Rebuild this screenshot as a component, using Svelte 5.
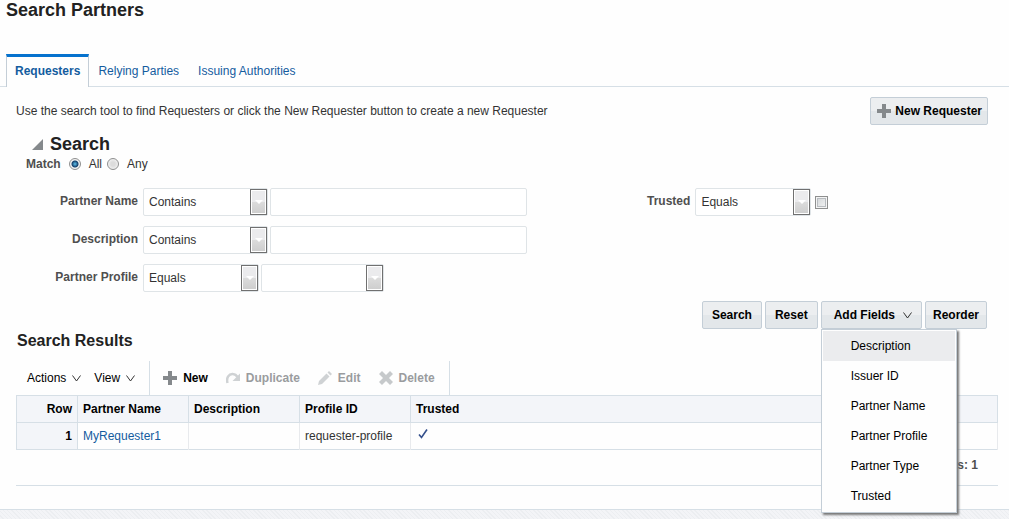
<script>
  let tabs = ["Requesters", "Relying Parties", "Issuing Authorities"]
  let activeTab = "Requesters"
  let match = "all"
  let searchOpen = true
  let menuOpen = true

  let name = ""
  let description = ""
  let nameOp = "Contains"
  let descriptionOp = "Contains"
  let profileOp = "Equals"
  let profile = ""
  let trustedOp = "Equals"
  let trusted = false

  let textOps = ["Contains", "Equals", "Starts with", "Ends with"]
  let profiles = ["", "requester-profile"]
  let fields = ["Description", "Issuer ID", "Partner Name", "Partner Profile", "Partner Type", "Trusted"]
  let rows = [
    { name: "MyRequester1", description: "", profile: "requester-profile", trusted: true }
  ]

  function reset() {
    name = ""
    description = ""
    profile = ""
    trusted = false
    match = "all"
  }
</script>

{#snippet plus()}
  <svg class="icon" viewBox="0 0 14 14" aria-hidden="true"><path d="M5 0h4v5h5v4H9v5H5V9H0V5h5z" fill="#85898c" /></svg>
{/snippet}

{#snippet chevron()}
  <svg class="chevron" viewBox="0 0 9 7" aria-hidden="true"><path d="M0.5 0.5L4.5 6L8.5 0.5" fill="none" stroke="#333" /></svg>
{/snippet}

{#snippet arrow()}
  <span class="arrow" aria-hidden="true"><svg viewBox="0 0 8 4"><path d="M0 0h8L4 4z" fill="#fff" /></svg></span>
{/snippet}

<div class="page">
  <h1>Search Partners</h1>

  <nav>
    {#each tabs as tab}
      <button class="tab" class:active={activeTab === tab} on:click={() => activeTab = tab}>{tab}</button>
    {/each}
  </nav>

  <main>
    <div class="intro">
      <p>Use the search tool to find Requesters or click the New Requester button to create a new Requester</p>
      <button class="btn new">{@render plus()}New Requester</button>
    </div>

    <section class="search">
      <h2>
        <button class="toggle" aria-label="Toggle search" on:click={() => searchOpen = !searchOpen}>
          <svg viewBox="0 0 11 11"><path d="M11 0v11H0z" fill="#85898c" /></svg>
        </button>
        Search
      </h2>

      {#if searchOpen}
        <div class="match" role="radiogroup" aria-labelledby="match">
          <b id="match">Match</b>
          <label><input type="radio" value="all" bind:group={match} />All</label>
          <label><input type="radio" value="any" bind:group={match} />Any</label>
        </div>

        <div class="form">
          <div class="fields">
            <div class="field">
              <label for="name">Partner Name</label>
              <span class="select wide">
                <select bind:value={nameOp} aria-label="Partner Name operator">
                  {#each textOps as op}<option>{op}</option>{/each}
                </select>
                {@render arrow()}
              </span>
              <input id="name" type="text" bind:value={name} />
            </div>
            <div class="field">
              <label for="description">Description</label>
              <span class="select wide">
                <select bind:value={descriptionOp} aria-label="Description operator">
                  {#each textOps as op}<option>{op}</option>{/each}
                </select>
                {@render arrow()}
              </span>
              <input id="description" type="text" bind:value={description} />
            </div>
            <div class="field">
              <label for="profile">Partner Profile</label>
              <span class="select">
                <select bind:value={profileOp} aria-label="Partner Profile operator">
                  <option>Equals</option>
                </select>
                {@render arrow()}
              </span>
              <span class="select value">
                <select id="profile" bind:value={profile}>
                  {#each profiles as p}<option>{p}</option>{/each}
                </select>
                {@render arrow()}
              </span>
            </div>
          </div>
          <div class="fields">
            <div class="field">
              <label for="trusted">Trusted</label>
              <span class="select">
                <select bind:value={trustedOp} aria-label="Trusted operator">
                  <option>Equals</option>
                </select>
                {@render arrow()}
              </span>
              <input id="trusted" type="checkbox" bind:checked={trusted} />
            </div>
          </div>
        </div>
      {/if}

      <div class="actions">
        <button class="btn">Search</button>
        <button class="btn" on:click={reset}>Reset</button>
        <div class="menu-wrap">
          <button class="btn drop" aria-expanded={menuOpen} on:click={() => menuOpen = !menuOpen}>Add Fields {@render chevron()}</button>
          {#if menuOpen}
            <div class="menu" role="menu">
              {#each fields as field, i}
                <button role="menuitem" class:current={i === 0}>{field}</button>
              {/each}
            </div>
          {/if}
        </div>
        <button class="btn reorder">Reorder</button>
      </div>
    </section>

    <section>
      <h3>Search Results</h3>

      <div class="toolbar">
        <div class="group menus">
          <button>Actions {@render chevron()}</button>
          <button>View {@render chevron()}</button>
        </div>
        <div class="group tools">
          <button>{@render plus()}New</button>
          <button disabled>
            <svg class="icon" viewBox="0 0 14 14" aria-hidden="true">
              <path d="M1.5 12C0 7 3 2.500 7 3C9 3.200 10.500 4.300 11.500 6" fill="none" stroke="#cfd2d4" stroke-width="2.500" />
              <path d="M14 2.500V10H6.500z" fill="#cfd2d4" />
            </svg>Duplicate
          </button>
          <button disabled>
            <svg class="icon" viewBox="0 0 14 14" aria-hidden="true">
              <path d="M0 14L1 10L8.500 2.500L11.500 5.500L4 13zM9.500 1.500L11 0L14 3L12.500 4.500z" fill="#cfd2d4" />
            </svg>Edit
          </button>
          <button disabled>
            <svg class="icon" viewBox="0 0 14 14" aria-hidden="true">
              <path d="M3 0L7 4L11 0L14 3L10 7L14 11L11 14L7 10L3 14L0 11L4 7L0 3z" fill="#c6c9cb" />
            </svg>Delete
          </button>
        </div>
      </div>

      <table>
        <thead>
          <tr>
            <th class="num">Row</th>
            <th class="col">Partner Name</th>
            <th class="col">Description</th>
            <th class="col">Profile ID</th>
            <th>Trusted</th>
          </tr>
        </thead>
        <tbody>
          {#each rows as row, i}
            <tr>
              <th class="num">{i + 1}</th>
              <td><a href="#partner">{row.name}</a></td>
              <td>{row.description}</td>
              <td>{row.profile}</td>
              <td>
                {#if row.trusted}
                  <svg class="check" viewBox="0 0 10 10" role="img" aria-label="Yes"><path d="M1 5.500L3.500 8.500L9 0.500" fill="none" stroke="#34508c" stroke-width="1.600" /></svg>
                {/if}
              </td>
            </tr>
          {/each}
        </tbody>
      </table>
      <p class="count">Rows: {rows.length}</p>
    </section>
  </main>

  <footer></footer>
</div>

<style>
  :global(body) {
    background: #fefefe;
  }

  .page {
    display: flex;
    flex-direction: column;
    min-height: 100vh;
    font-family: "Liberation Sans", Arial, sans-serif;
    font-size: 12px;
    line-height: 16px;
    color: #333;
  }

  h1, h2, h3, p {
    margin: 0;
    color: #222;
  }

  p {
    color: #333;
  }

  button, input, select {
    font: inherit;
    color: inherit;
    margin: 0;
    box-sizing: border-box;
  }

  button {
    border: 0;
    padding: 0;
    background: none;
    cursor: pointer;
  }

  h1 {
    padding-left: 6px;
    margin-bottom: 34px;
    font-size: 18px;
    line-height: 20px;
  }

  nav {
    display: flex;
    padding-left: 6px;
    box-shadow: inset 0 -1px #d6dfe6;
  }

  .tab {
    height: 33px;
    padding: 0 10px 0 9px;
    color: #145c9e;
  }

  .tab.active {
    padding: 0 8px 2px;
    border: 1px solid #c4ced7;
    border-top: 3px solid #0572ce;
    border-bottom: 0;
    background: #fefefe;
    font-weight: bold;
  }

  main {
    padding: 10px 11px 0 16px;
  }

  .intro {
    display: flex;
    justify-content: space-between;
    align-items: center;
    padding-right: 10px;
  }

  .btn {
    height: 28px;
    padding: 0 9px;
    border: 1px solid #c4ced7;
    border-radius: 2px;
    background: linear-gradient(#eceef0 50%, #e3e7ea 50%);
    font-weight: bold;
    color: #000;
  }

  .new {
    display: flex;
    align-items: center;
    gap: 4px;
    padding: 0 5px 0 6px;
  }

  .icon {
    width: 14px;
    height: 14px;
    flex: none;
  }

  .chevron {
    width: 9px;
    height: 7px;
    flex: none;
  }

  h2 {
    display: flex;
    align-items: center;
    gap: 7px;
    margin: 9px 0 2px 16px;
    font-size: 18px;
    line-height: 20px;
  }

  .toggle svg {
    display: block;
    width: 11px;
    height: 11px;
  }

  .match {
    display: flex;
    align-items: center;
    gap: 5px;
    margin: 0 0 16px 10px;
  }

  .match b {
    margin-right: 3px;
    color: #4f4f4f;
  }

  .match label {
    display: flex;
    align-items: center;
    gap: 8px;
  }

  input[type="radio"] {
    appearance: none;
    width: 12px;
    height: 12px;
    border: 1px solid #8e8f8f;
    border-radius: 50%;
    background: radial-gradient(#dcdcdc 30%, #fff);
  }

  input[type="radio"]:checked {
    background: radial-gradient(circle, #5fc3ee 0, #14406c 3px, #f4f4f4 4px);
  }

  .form {
    display: grid;
    grid-template-columns: 9fr 7fr;
    margin-bottom: 9px;
  }

  .fields {
    display: flex;
    flex-direction: column;
    gap: 10px;
  }

  .field {
    display: flex;
    align-items: center;
    gap: 2px;
  }

  .field label {
    width: 122px;
    margin: 0 3px 2px 0;
    text-align: right;
    font-weight: bold;
    color: #4f4f4f;
  }

  .select {
    position: relative;
    width: 116px;
  }

  .select.wide {
    width: 125px;
  }

  .select.value {
    width: 123px;
  }

  select, input[type="text"] {
    display: block;
    height: 28px;
    border: 1px solid #dfe4e7;
    border-radius: 2px;
    background: #fff;
  }

  select {
    appearance: none;
    width: 100%;
    padding: 0 22px 0 5px;
  }

  input[type="text"] {
    width: 257px;
    padding: 0 5px;
  }

  .arrow {
    position: absolute;
    top: 1px;
    right: 1px;
    bottom: 1px;
    width: 17px;
    box-sizing: border-box;
    display: flex;
    align-items: center;
    justify-content: center;
    border: 1px solid #707070;
    box-shadow: inset 0 0 0 1px #fff;
    background: linear-gradient(#ebebed 50%, #dcdcdc 50%, #cdcdcd);
    pointer-events: none;
  }

  .arrow svg {
    width: 8px;
    height: 4px;
  }

  input[type="checkbox"] {
    appearance: none;
    width: 13px;
    height: 13px;
    margin-left: 2px;
    border: 1px solid #8e8f8f;
    box-shadow: inset 0 0 0 1px #f4f4f4, inset 0 0 0 2px #b8bcc0;
    background: linear-gradient(135deg, #cfd3d6, #f6f6f6);
  }

  input[type="checkbox"]:checked {
    background: #14507c;
  }

  .actions {
    display: flex;
    justify-content: flex-end;
    gap: 3px;
    padding-right: 11px;
  }

  .actions .reorder {
    padding: 0 7px;
  }

  .drop {
    display: flex;
    align-items: center;
    gap: 8px;
    padding: 0 9px 0 12px;
  }

  .menu-wrap {
    position: relative;
  }

  .menu {
    position: absolute;
    top: 28px;
    left: 0;
    z-index: 1;
    width: 136px;
    box-sizing: border-box;
    padding: 1px;
    border: 1px solid #c4ced7;
    background: #fefefe;
    box-shadow: 2px 2px 2px #777;
  }

  .menu button {
    display: block;
    width: 100%;
    height: 30px;
    padding-left: 28px;
    text-align: left;
    color: #000;
  }

  .menu .current, .menu button:hover {
    background: #ebecee;
  }

  h3 {
    margin: 2px 0 10px 1px;
    font-size: 16px;
    line-height: 20px;
  }

  .toolbar {
    display: flex;
    height: 34px;
  }

  .group {
    display: flex;
    align-items: center;
    border-right: 1px solid #d6dfe6;
  }

  .group button {
    display: flex;
    align-items: center;
    gap: 6px;
    color: #000;
  }

  .menus {
    gap: 13px;
    padding: 0 14px 0 11px;
  }

  .tools {
    gap: 18px;
    padding: 0 14px 0 13px;
  }

  .tools button {
    font-weight: bold;
  }

  .tools button:disabled {
    color: #9a9c9e;
    cursor: default;
  }

  table {
    width: 100%;
    table-layout: fixed;
    border-collapse: collapse;
    border: 1px solid #d6dfe6;
  }

  th, td {
    height: 26px;
    padding: 0 5px;
    border-right: 1px solid #e8eaed;
    text-align: left;
  }

  th {
    border: 1px solid #d6dfe6;
    background: #f3f5f9;
    color: #000;
  }

  .num {
    width: 50px;
    text-align: right;
  }

  .col {
    width: 100px;
  }

  a {
    color: #145c9e;
    text-decoration: none;
  }

  .check {
    display: block;
    width: 10px;
    height: 10px;
    margin: 0 2px 4px;
  }

  .count {
    padding: 7px 20px 12px 0;
    border-bottom: 1px solid #d6dfe6;
    text-align: right;
    font-weight: bold;
    color: #4f4f4f;
  }

  footer {
    flex: 1;
    min-height: 8px;
    margin-top: 23px;
    border-top: 1px solid #d6dfe6;
    background: repeating-linear-gradient(45deg, #f3f4f7 0, #f3f4f7 2px, #eceef1 2px, #eceef1 3px);
  }
</style>
